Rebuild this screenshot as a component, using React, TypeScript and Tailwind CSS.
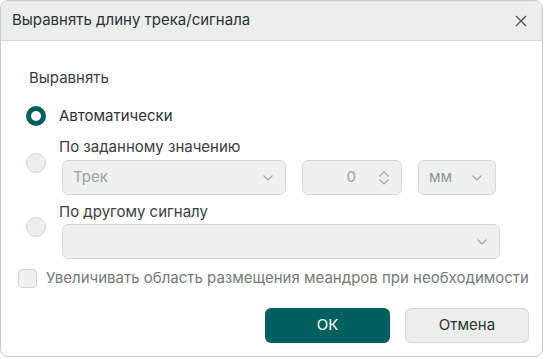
import React from 'react';

const Chevron = ({ className = '' }: { className?: string }) => (
  <svg width="10" height="6" viewBox="0 0 10 6" className={className} fill="none">
    <path d="M0.5 0.5 L5 5 L9.5 0.5" stroke="#9aa3a0" strokeWidth="1.1" />
  </svg>
);

const Radio = ({ checked, className = '' }: { checked?: boolean; className?: string }) =>
  checked ? (
    <div className={`w-5 h-5 rounded-full border-[5px] border-[#00605f] bg-white shrink-0 ${className}`} />
  ) : (
    <div className={`w-5 h-5 rounded-full border border-[#cfd5d3] bg-[#eceeed] shrink-0 ${className}`} />
  );

const App = () => {
  return (
    <div className="w-[545px] h-[359px] bg-white" style={{ fontFamily: 'Inter, "Noto Sans", sans-serif' }}>
      <div className="w-[543px] h-[357px] border border-[#c8cccb] rounded-[8px] overflow-hidden flex flex-col">
        {/* Header */}
        <div className="h-10 shrink-0 bg-[#eceeed] border-b border-[#d3d8d6] flex items-center justify-between pl-[11px] pr-[15px]">
          <span className="text-[15px] text-[#2e3331]">Выравнять длину трека/сигнала</span>
          <svg width="12" height="12" viewBox="0 0 12 12" fill="none">
            <path d="M1 1 L11 11 M11 1 L1 11" stroke="#4b5250" strokeWidth="1.3" />
          </svg>
        </div>

        {/* Body */}
        <div className="flex-1 flex flex-col pl-[25px] text-[15px] text-[#3a403e]">
          <div className="mt-[27px] ml-[3px] h-5 leading-5">Выравнять</div>

          <div className="mt-[18px] flex items-center gap-[13px] h-5">
            <Radio checked />
            <span className="leading-5 text-[#2e3331]">Автоматически</span>
          </div>

          <div className="mt-[11px] flex">
            <Radio className="mt-[16px]" />
            <div className="ml-[13px] flex flex-col">
              <span className="h-5 leading-5 text-[#3a403e]">По заданному значению</span>
              <div className="mt-[3px] ml-[3px] flex gap-4">
                <div className="w-[224px] h-[35px] rounded-[6px] border border-[#d3d9d7] bg-[#eff1f0] flex items-center justify-between pl-[10px] pr-[12px] text-[#9aa3a0]">
                  <span>Трек</span>
                  <Chevron />
                </div>
                <div className="w-[100px] h-[35px] rounded-[6px] border border-[#d3d9d7] bg-[#eff1f0] flex items-center justify-end pr-[12px] gap-[23px] text-[#9aa3a0]">
                  <span>0</span>
                  <div className="flex flex-col gap-[2px]">
                    <Chevron className="rotate-180" />
                    <Chevron />
                  </div>
                </div>
                <div className="w-[78px] h-[35px] rounded-[6px] border border-[#d3d9d7] bg-[#eff1f0] flex items-center justify-between pl-[10px] pr-[13px] text-[#8f9996]">
                  <span>мм</span>
                  <Chevron />
                </div>
              </div>
            </div>
          </div>

          <div className="mt-[7px] flex">
            <Radio className="mt-[15px]" />
            <div className="ml-[13px] flex flex-col">
              <span className="h-5 leading-5 text-[#3a403e]">По другому сигналу</span>
              <div className="mt-[2px] ml-[3px] w-[438px] h-[35px] rounded-[6px] border border-[#d3d9d7] bg-[#eff1f0] flex items-center justify-end pr-[12px]">
                <Chevron />
              </div>
            </div>
          </div>

          <div className="mt-[9px] -ml-[8px] flex items-center gap-[9px] h-5">
            <div className="w-[19px] h-[19px] rounded-[4px] border border-[#cfd5d3] bg-[#eff1f0]" />
            <span className="leading-5 text-[#737b78]">Увеличивать область размещения меандров при необходимости</span>
          </div>

          <div className="mt-[20px] flex justify-end gap-[15px] pr-[13px]">
            <button className="w-[125px] h-[35px] rounded-[6px] bg-[#00605f] text-white text-[15px]">ОК</button>
            <button className="w-[124px] h-[35px] rounded-[6px] bg-[#eceeed] border border-[#d3d9d7] text-[#2e3331] text-[15px]">Отмена</button>
          </div>
        </div>
      </div>
    </div>
  );
};

export default App;
